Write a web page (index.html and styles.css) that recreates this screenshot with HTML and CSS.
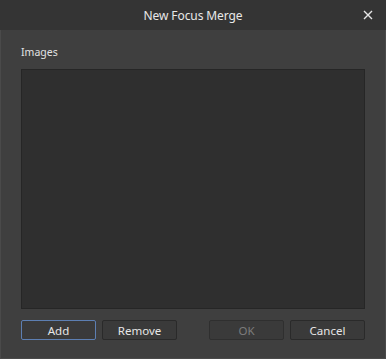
FILE: index.html
```html
<!DOCTYPE html>
<html>
<head>
<meta charset="utf-8">
<link rel="stylesheet" href="styles.css">
</head>
<body>
<div class="dialog">
  <div class="titlebar">
    <span class="title">New Focus Merge</span>
    <svg class="close" width="10" height="10" viewBox="0 0 10 10"><path d="M1 1L9 9M9 1L1 9" stroke="#e6e6e6" stroke-width="1.4"/></svg>
  </div>
  <div class="content">
    <div class="label">Images</div>
    <div class="list"></div>
    <div class="buttons">
      <div class="group">
        <button class="btn primary">Add</button>
        <button class="btn">Remove</button>
      </div>
      <div class="group">
        <button class="btn disabled">OK</button>
        <button class="btn">Cancel</button>
      </div>
    </div>
  </div>
</div>
</body>
</html>
```
FILE: styles.css
```css
html, body { margin: 0; padding: 0; background: #3f3f3f; }
.dialog {
  width: 386px; height: 359px; box-sizing: border-box;
  border: 1px solid #4a4a4a; border-top: none;
  background: #3f3f3f;
  font-family: "Noto Sans", "Open Sans", sans-serif;
  display: flex; flex-direction: column;
}
.titlebar {
  height: 30px; background: #343434; position: relative;
  display: flex; align-items: center; justify-content: center;
  margin: 0 -1px;
}
.title { color: #e8e8e8; font-size: 12px; letter-spacing: -0.1px; }
.close { position: absolute; right: 13px; top: 10px; }
.content { flex: 1; padding: 15px 20px 0 20px; display: flex; flex-direction: column; }
.label { color: #e2e2e2; font-size: 10.5px; height: 24px; line-height: 14px; }
.list {
  height: 240px; background: #2f2f2f; border: 1px solid #262626;
  box-sizing: border-box;
}
.buttons { display: flex; justify-content: space-between; margin-top: 11px; }
.group { display: flex; gap: 6px; }
.btn {
  width: 75px; height: 20px; box-sizing: border-box; padding: 0;
  background: #3a3a3a; border: 1px solid #2a2a2a; border-radius: 2px;
  color: #e6e6e6; font-family: inherit; font-size: 11.5px; line-height: 17px;
}
.btn.primary { border-color: #5d7fb2; }
.btn.disabled { color: #7c7c7c; border-color: #2f2f2f; }
```
